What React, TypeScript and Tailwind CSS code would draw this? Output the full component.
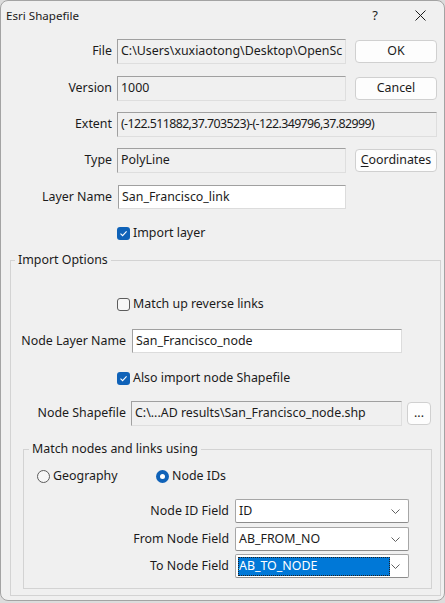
import React from "react";

function Check({ checked }: { checked: boolean }) {
  return checked ? (
    <span className="w-[13px] h-[13px] rounded-[3px] bg-[#0f62b8] flex items-center justify-center shrink-0">
      <svg width="9" height="9" viewBox="0 0 9 9">
        <path d="M1.5 4.6 L3.6 6.6 L7.6 2.3" fill="none" stroke="#ffffff" strokeWidth="1.1" />
      </svg>
    </span>
  ) : (
    <span className="w-[13px] h-[13px] rounded-[3px] border border-[#5c5c5c] bg-[#f7f7f7] shrink-0" />
  );
}

function Radio({ checked }: { checked: boolean }) {
  return checked ? (
    <span className="w-[13px] h-[13px] rounded-full bg-[#0f62b8] flex items-center justify-center shrink-0">
      <span className="w-[5px] h-[5px] rounded-full bg-white" />
    </span>
  ) : (
    <span className="w-[13px] h-[13px] rounded-full border border-[#5c5c5c] bg-[#f7f7f7] shrink-0" />
  );
}

function Chevron() {
  return (
    <svg width="9" height="5" viewBox="0 0 9 5" className="shrink-0">
      <path d="M0.5 0.5 L4.5 4.5 L8.5 0.5" fill="none" stroke="#606060" strokeWidth="1" />
    </svg>
  );
}

function Combo({ value, selected }: { value: string; selected?: boolean }) {
  return (
    <div className="ml-[6px] w-[174px] h-[24px] bg-white border border-[#a6a6a6] border-b-[#8c8c8c] rounded-[2px] flex items-center pl-[2px] pr-[8px]">
      {selected ? (
        <div className="w-[152px] h-[19px] bg-[#0078d7] text-white flex items-center pl-[1px] outline-1 outline-dotted outline-[#202020] -outline-offset-1">
          {value}
        </div>
      ) : (
        <div className="flex-1 pl-[1px]">{value}</div>
      )}
      <div className="ml-auto">
        <Chevron />
      </div>
    </div>
  );
}

const roInput =
  "h-[25px] bg-[#f0f0f0] border border-t-[#a0a0a0] border-l-[#a0a0a0] border-r-[#dedede] border-b-[#dedede] flex items-center pl-[3px] overflow-hidden whitespace-nowrap";
const wInput =
  "h-[24px] bg-white border border-t-[#a0a0a0] border-l-[#a0a0a0] border-r-[#dcdcdc] border-b-[#dcdcdc] flex items-center pl-[3px] overflow-hidden whitespace-nowrap";
const btn =
  "h-[23px] bg-[#fdfdfd] border border-[#d0d0d0] rounded-[4px] flex items-center justify-center";

export default function App() {
  return (
    <div className="w-[445px] h-[603px] bg-[#dcdcdc] font-['Noto_Sans',sans-serif] text-[12.4px] text-[#1b1b1b] leading-none">
      <div className="w-[445px] h-[601px] bg-[#f0f0f0] border border-[#a3a3a3] rounded-[8px] flex flex-col overflow-hidden">
        {/* Title bar */}
        <div className="h-[29px] flex items-center pl-[5px] shrink-0">
          <span className="text-[11.6px]">Esri Shapefile</span>
          <span className="ml-auto mr-[37px] text-[13px]">?</span>
          <svg width="11" height="11" viewBox="0 0 11 11" className="mr-[18px]">
            <path d="M0.5 0.5 L10.5 10.5 M10.5 0.5 L0.5 10.5" stroke="#1b1b1b" strokeWidth="1" />
          </svg>
        </div>

        {/* File */}
        <div className="flex items-center mt-[9px]">
          <div className="w-[111px] text-right">File</div>
          <div className={roInput + " ml-[5px] w-[229px]"}>C:\Users\xuxiaotong\Desktop\OpenSc</div>
          <div className={btn + " ml-[9px] w-[82px] border-[#1d64a0]"}>OK</div>
        </div>
        {/* Version */}
        <div className="flex items-center mt-[12px]">
          <div className="w-[111px] text-right">Version</div>
          <div className={roInput + " ml-[5px] w-[229px]"}>1000</div>
          <div className={btn + " ml-[9px] w-[82px]"}>Cancel</div>
        </div>
        {/* Extent */}
        <div className="flex items-center mt-[11px]">
          <div className="w-[111px] text-right">Extent</div>
          <div className={roInput + " ml-[5px] w-[320px] tracking-[-0.6px]"}>(-122.511882,37.703523)-(-122.349796,37.82999)</div>
        </div>
        {/* Type */}
        <div className="flex items-center mt-[11px]">
          <div className="w-[111px] text-right">Type</div>
          <div className={roInput + " ml-[5px] w-[229px]"}>PolyLine</div>
          <div className={btn + " ml-[9px] w-[82px]"}>
            <span className="underline underline-offset-2">C</span>oordinates
          </div>
        </div>
        {/* Layer Name */}
        <div className="flex items-center mt-[12px]">
          <div className="w-[111px] text-right">Layer Name</div>
          <div className={wInput + " ml-[6px] w-[228px]"}>San_Francisco_link</div>
        </div>
        {/* Import layer */}
        <div className="flex items-center mt-[18px] pl-[116px] h-[13px]">
          <Check checked />
          <span className="ml-[3px]">Import layer</span>
        </div>

        {/* Import Options */}
        <fieldset className="ml-[9px] mt-[14px] w-[431px] border border-[#d3d3d3] pb-[6px]">
          <legend className="ml-[4px] px-[3px] leading-[12px]">Import Options</legend>

          <div className="flex items-center mt-[32px] pl-[106px] h-[13px]">
            <Check checked={false} />
            <span className="ml-[3px]">Match up reverse links</span>
          </div>

          <div className="flex items-center mt-[18px]">
            <div className="w-[115px] text-right">Node Layer Name</div>
            <div className={wInput + " ml-[6px] w-[270px]"}>San_Francisco_node</div>
          </div>

          <div className="flex items-center mt-[19px] pl-[106px] h-[13px]">
            <Check checked />
            <span className="ml-[3px]">Also import node Shapefile</span>
          </div>

          <div className="flex items-center mt-[16px]">
            <div className="w-[115px] text-right">Node Shapefile</div>
            <div className={roInput + " ml-[5px] w-[271px]"}>C:\...AD results\San_Francisco_node.shp</div>
            <div className={btn + " ml-[5px] w-[24px]"}>...</div>
          </div>

          {/* Match nodes and links using */}
          <fieldset className="ml-[12px] mt-[17px] w-[409px] border border-[#d3d3d3] pb-[10px]">
            <legend className="ml-[5px] px-[3px] leading-[12px]">Match nodes and links using</legend>

            <div className="flex items-center mt-[15px] pl-[13px] h-[13px]">
              <span className="w-[119px] flex items-center">
                <Radio checked={false} />
                <span className="ml-[3px]">Geography</span>
              </span>
              <span className="flex items-center">
                <Radio checked />
                <span className="ml-[3px]">Node IDs</span>
              </span>
            </div>

            <div className="flex items-center mt-[16px]">
              <div className="w-[205px] text-right">Node ID Field</div>
              <Combo value="ID" />
            </div>
            <div className="flex items-center mt-[4px]">
              <div className="w-[205px] text-right">From Node Field</div>
              <Combo value="AB_FROM_NO" />
            </div>
            <div className="flex items-center mt-[3px]">
              <div className="w-[205px] text-right">To Node Field</div>
              <Combo value="AB_TO_NODE" selected />
            </div>
          </fieldset>
        </fieldset>
      </div>
    </div>
  );
}
